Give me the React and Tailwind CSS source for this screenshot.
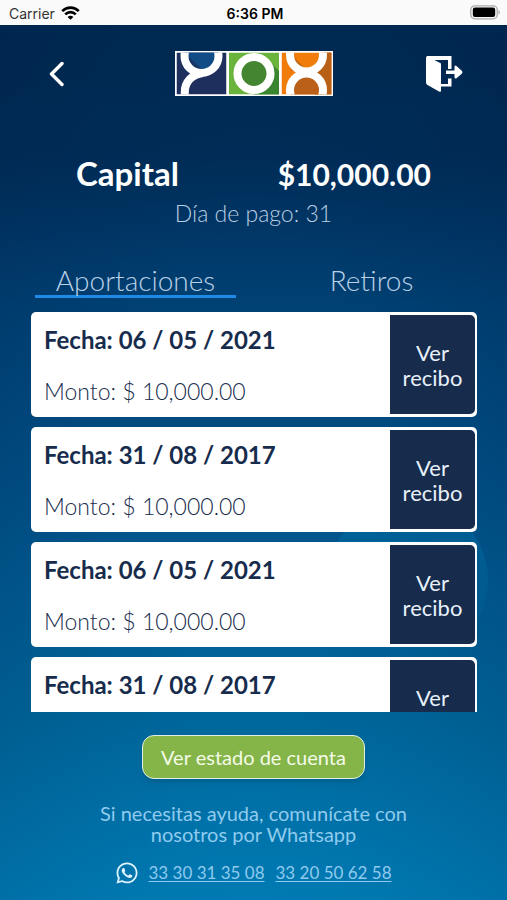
import { FaWhatsapp } from 'react-icons/fa'

const movements = [
  { id: 1, date: '06 / 05 / 2021', amount: '10,000.00' },
  { id: 2, date: '31 / 08 / 2017', amount: '10,000.00' },
  { id: 3, date: '06 / 05 / 2021', amount: '10,000.00' },
  { id: 4, date: '31 / 08 / 2017', amount: '10,000.00' },
]

const phones = ['33 30 31 35 08', '33 20 50 62 58']

function StatusBar() {
  return (
    <div className="grid h-[25px] grid-cols-3 items-center bg-[#fafafa] pr-[6px] pl-[9px] font-['Inter',sans-serif] text-[14px] text-black">
      <div className="flex items-center gap-[6px] pt-px text-[#333]">
        Carrier
        <svg width="19" height="14" viewBox="0 0 19 14" fill="none" stroke="#000" strokeWidth="2.6">
          <path d="M1.2 5.2C6 .4 13 .4 17.8 5.2" />
          <path d="M4.2 8.4c3-3 7.600-3 10.600 0" />
          <path d="M9.500 13.800 6.600 10.900c1.700-1.500 4.100-1.500 5.800 0z" fill="#000" stroke="none" />
        </svg>
      </div>
      <div className="pt-px text-center font-semibold">6:36 PM</div>
      <svg className="justify-self-end" width="31" height="15" viewBox="0 0 31 15">
        <rect x=".8" y=".8" width="26.400" height="13" rx="4" fill="#fafafa" stroke="#aaa" strokeWidth="1.300" />
        <rect x="2.800" y="2.600" width="22.400" height="9.400" rx="2.200" fill="#000" />
        <path d="M28.500 5v4.600c1.800-.8 1.800-3.800 0-4.600z" fill="#aaa" />
      </svg>
    </div>
  )
}

function Logo() {
  return (
    <svg width="158" height="45" viewBox="0 0 158 45" role="img" aria-label="YOX">
      <defs>
        <clipPath id="tile-y"><rect x="1.500" y="1.500" width="50" height="42" /></clipPath>
        <clipPath id="tile-o"><rect x="54" y="1.500" width="50" height="42" /></clipPath>
        <clipPath id="tile-x"><rect x="106.500" y="1.500" width="50" height="42" /></clipPath>
      </defs>
      <rect width="158" height="45" fill="#fff" />
      <g clipPath="url(#tile-y)">
        <rect x="1.500" y="1.500" width="50" height="42" fill="#1e2f5e" />
        <circle cx="26.500" cy="5" r="17" fill="#124c86" />
        <path d="M9 1 26.500 18 10 22z" fill="#173767" />
        <circle cx="26.500" cy="5" r="17" fill="none" stroke="#fff" strokeWidth="8" />
        <path d="M9.800 46v-5c0-10 7-17.500 18-19" fill="none" stroke="#fff" strokeWidth="8" />
      </g>
      <g clipPath="url(#tile-o)">
        <rect x="54" y="1.500" width="50" height="42" fill="#6ab43e" />
        <path d="M93 9 104 20v24H80L66 36z" fill="#3a852f" />
        <circle cx="79" cy="22.500" r="16.500" fill="#438530" stroke="#fff" strokeWidth="8" />
      </g>
      <g clipPath="url(#tile-x)">
        <rect x="106.500" y="1.500" width="50" height="42" fill="#f07d0a" />
        <path d="M149 1h8v43H140V22z" fill="#b96017" />
        <path d="M114 1 133 20 116 20z" fill="#c66812" />
        <circle cx="131.500" cy="4" r="16.500" fill="none" stroke="#fff" strokeWidth="8" />
        <circle cx="131.500" cy="39" r="16.500" fill="#bb6018" stroke="#fff" strokeWidth="8" />
      </g>
    </svg>
  )
}

function Header() {
  return (
    <header className="flex items-center justify-between px-11 pt-[26px]">
      <button aria-label="Regresar" className="flex w-[37px] pl-1">
        <svg width="16" height="26" viewBox="0 0 16 26" fill="none" stroke="#fff" strokeWidth="3.400" strokeLinecap="round" strokeLinejoin="round">
          <path d="M14 2.500 3.500 13 14 23.500" />
        </svg>
      </button>
      <Logo />
      <button aria-label="Salir">
        <svg width="37" height="36" viewBox="0 0 37 36" fill="#fff">
          <path d="M1.500 0H25.500V13H22V4H8.500L15 7.500V28H22V22.500H25.500V30.500H15V34.500Q15 36.500 13 35.400L1.500 29Q0 28 0 26.500V2Q0 0 1.500 0Z" />
          <path d="M20 14.500H28.500V10.500Q29 9 30.500 10L36 15Q37 16.300 36 17.500L30.500 22.200Q29 23 28.500 21.500V18H20Z" />
        </svg>
      </button>
    </header>
  )
}

function MovementCard({ date, amount }) {
  return (
    <li className="flex h-[105px] shrink-0 rounded-[5px] bg-white py-[3px] pr-[2px] pl-[13px] text-[#172c4c]">
      <div className="flex flex-1 flex-col justify-between pt-[10px] pb-[8px] leading-[30px]">
        <p className="text-[24px] font-bold">Fecha: {date}</p>
        <p className="text-[23px] font-light">Monto: $ {amount}</p>
      </div>
      <button className="w-[85px] rounded-r-[5px] bg-[#172c4c] px-2 text-[22px] leading-[25px] text-[#e8f1fa]">
        Ver recibo
      </button>
    </li>
  )
}

export default function App() {
  return (
    <div className="flex min-h-screen flex-col font-['Century_Gothic','Lato',sans-serif]">
      <StatusBar />
      <main className="relative isolate flex flex-1 flex-col bg-[radial-gradient(ellipse_at_center,transparent_35%,rgba(0,20,60,0.2)_100%),linear-gradient(to_bottom,#002b53_0%,#002d58_15%,#004174_32%,#005087_53%,#006a9f_80%,#0087c2_100%)]">
        <div className="absolute top-[475px] right-[19px] -z-10 size-[160px] rounded-full bg-linear-to-b from-[#0089be]/30 to-transparent" />
        <Header />

        <section className="mt-[59px] text-center">
          <div className="flex items-baseline justify-between px-[76px] leading-[36px] font-bold text-white">
            <h1 className="text-[33px]">Capital</h1>
            <p className="text-[30px]">$10,000.00</p>
          </div>
          <p className="mt-[8px] text-[23px] leading-[26px] font-light text-[#b9cee2]">Día de pago: 31</p>
        </section>

        <div role="tablist" className="mt-[39px] flex justify-between px-[35px] text-[28px] leading-[30px] font-light text-[#b9d0e6]">
          <button role="tab" aria-selected="true" className="w-[46%] border-b-3 border-[#1e8ae6]">
            Aportaciones
          </button>
          <button role="tab" aria-selected="false" className="w-[46%] border-b-3 border-transparent">
            Retiros
          </button>
        </div>

        <ul className="mr-[30px] ml-[31px] mt-[14px] flex h-[400px] flex-col gap-[10px] overflow-y-auto [scrollbar-width:none]">
          {movements.map((m) => (
            <MovementCard key={m.id} date={m.date} amount={m.amount} />
          ))}
        </ul>

        <footer className="mt-[23px] flex flex-col items-center pb-4 text-[#8fcbee]">
          <button className="h-[44px] rounded-[12px] border border-[#dff0e8] bg-[#85b548] px-[18px] text-[20px] text-[#f4fbe8] shadow-md">
            Ver estado de cuenta
          </button>
          <p className="mt-[24px] max-w-[330px] text-center text-[20px] leading-[21px]">
            Si necesitas ayuda, comunícate con nosotros por Whatsapp
          </p>
          <div className="mt-[16px] flex items-center text-[17px] leading-[24px]">
            <FaWhatsapp size={24} className="mr-[9px] text-[#dff4ff]" />
            <div className="flex gap-[11px]">
              {phones.map((phone) => (
                <a key={phone} href={'https://wa.me/52' + phone.replaceAll(' ', '')} className="underline underline-offset-2">
                  {phone}
                </a>
              ))}
            </div>
          </div>
        </footer>
      </main>
    </div>
  )
}
